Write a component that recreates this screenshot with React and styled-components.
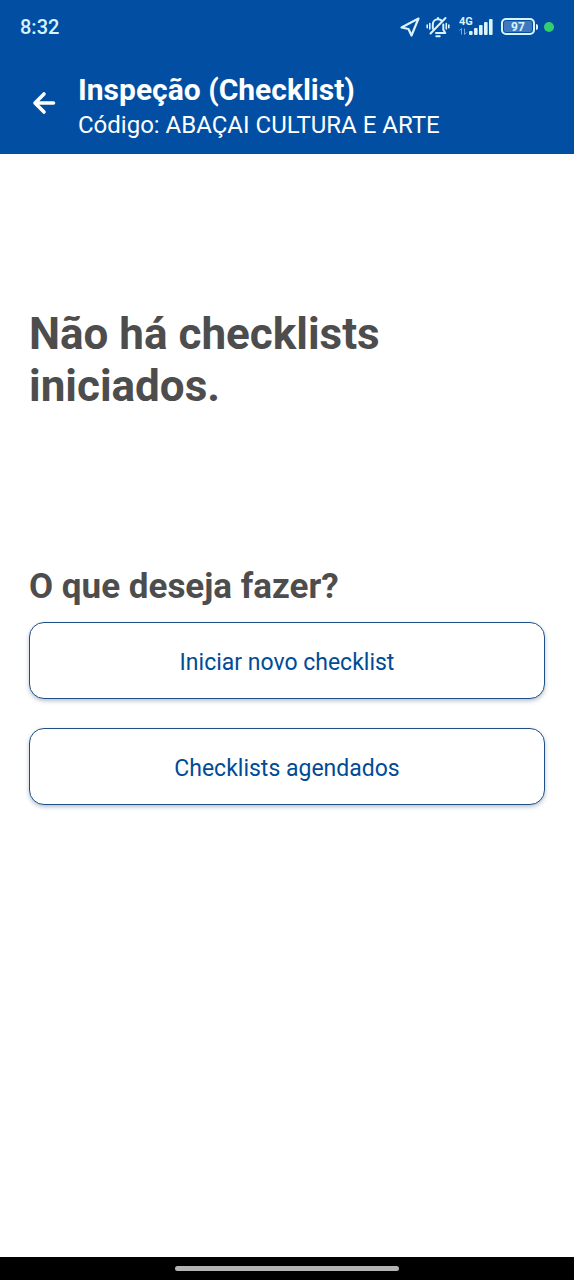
import React from "react";
import styled, { createGlobalStyle } from "styled-components";

const GlobalStyle = createGlobalStyle`
  *, *::before, *::after { box-sizing: border-box; }
  body { margin: 0; background: #fff; font-family: Roboto, "Liberation Sans", sans-serif; }
  h1, h2, p { margin: 0; }
`;

const Screen = styled.div`
  min-height: 100vh;
  display: flex;
  flex-direction: column;
`;

const StatusBar = styled.div`
  display: flex;
  align-items: center;
  justify-content: space-between;
  height: 53px;
  padding: 0 20px;
  background: #014ea3;
  color: #d9f3ff;
`;

const Clock = styled.time`
  font-size: 20px;
  line-height: 24px;
  font-weight: 500;
`;

const StatusIcons = styled.div`
  display: flex;
  align-items: center;
`;

const StatusIcon = styled.svg`
  display: block;
  flex: none;
  margin-right: ${(p) => p.$gap || 0}px;
`;

const Signal = styled.div`
  display: grid;
  grid-template-columns: 34px;
  margin-right: 8px;

  > * { grid-area: 1 / 1; }
`;

const Network = styled.span`
  font-size: 11px;
  line-height: 10px;
  font-weight: 700;
`;

const Battery = styled.div`
  display: flex;
  align-items: center;
  margin-right: 6px;

  &::after {
    content: "";
    width: 2px;
    height: 6px;
    margin-left: 1px;
    border-radius: 0 2px 2px 0;
    background: #d9f3ff;
  }
`;

const BatteryLevel = styled.span`
  width: 34px;
  height: 17px;
  border: 2px solid #d9f3ff;
  border-radius: 5px;
  box-shadow: inset 0 0 0 1px #014ea3;
  background: #3f78bd;
  font-size: 12px;
  line-height: 14px;
  font-weight: 700;
  text-align: center;
`;

const ActiveDot = styled.span`
  width: 10px;
  height: 10px;
  border-radius: 50%;
  background: #33cf6e;
`;

const Header = styled.header`
  display: flex;
  align-items: flex-start;
  gap: 12px;
  padding: 19px 22px 12px;
  background: #014ea3;
  color: #fff;
`;

const BackButton = styled.button`
  display: grid;
  place-items: center;
  width: 44px;
  height: 62px;
  padding: 0;
  border: 0;
  background: none;
  color: inherit;
  cursor: pointer;
`;

const Title = styled.h1`
  font-size: 30px;
  line-height: 36px;
  font-weight: 700;
`;

const Subtitle = styled.p`
  font-size: 24px;
  line-height: 34px;
`;

const Main = styled.main`
  flex: 1;
  padding: 0 29px 29px;
`;

const EmptyMessage = styled.p`
  padding: 154px 0;
  color: #4d4d4d;
  font-size: 44px;
  line-height: 52px;
  font-weight: 700;
`;

const Question = styled.h2`
  margin-bottom: 14px;
  color: #4d4d4d;
  font-size: 35px;
  line-height: 42px;
  font-weight: 700;
`;

const Actions = styled.div`
  display: flex;
  flex-direction: column;
  gap: 29px;
`;

const ActionButton = styled.button`
  width: 100%;
  padding: 26px 16px 22px;
  border: 1px solid #1f4f88;
  border-radius: 15px;
  background: #fff;
  box-shadow: 0 2px 4px rgba(20, 50, 90, 0.3);
  color: #014b96;
  font-family: inherit;
  font-size: 23px;
  line-height: 27px;
  cursor: pointer;
`;

const NavigationBar = styled.div`
  display: flex;
  justify-content: center;
  align-items: center;
  height: 23px;
  background: #000;
`;

const HomeHandle = styled.span`
  width: 39%;
  height: 5px;
  border-radius: 3px;
  background: #b3b3b3;
`;

function LocationIcon() {
  return (
    <StatusIcon $gap={6} width="20" height="20" viewBox="0 0 20 20" fill="none" stroke="currentColor" strokeWidth="2.2" strokeLinejoin="round" aria-hidden="true">
      <path d="M18.5 1.5 1.5 10.5 8.5 12 11.5 18.5Z" />
    </StatusIcon>
  );
}

function MutedBellIcon() {
  return (
    <StatusIcon $gap={9} width="24" height="22" viewBox="0 0 24 22" fill="none" stroke="currentColor" strokeWidth="2" strokeLinecap="round" strokeLinejoin="round" aria-hidden="true">
      <path d="M6.8 12.5V8.5C6.8 5.5 9 3.2 12 3.2c1.2 0 2.2.3 3 .9M17.3 8.5v5.2l2 3.3H10M12 3.2V2M19.5 2 4.5 17.5" />
      <path d="M10.3 20.3h3.4" />
      <path d="M3.8 7.5v5.5M1.2 9v2.8M20.3 7.5v5.5M22.8 9v2.8" strokeWidth="1.6" />
    </StatusIcon>
  );
}

function SignalBars() {
  return (
    <StatusIcon width="34" height="19" viewBox="0 0 34 19" fill="currentColor" aria-hidden="true">
      <rect x="10" y="14" width="3.6" height="4" rx="1" />
      <rect x="15" y="11" width="3.6" height="7" rx="1" />
      <rect x="20" y="8" width="3.6" height="10" rx="1" />
      <rect x="25" y="5" width="3.6" height="13" rx="1" />
      <rect x="30" y="2" width="3.6" height="16" rx="1" />
      <path d="M2.5 17.5v-6L.5 13.5M5.5 11.5v6L7.5 15.5" fill="none" stroke="#76a9dc" />
    </StatusIcon>
  );
}

function BackIcon() {
  return (
    <svg width="24" height="24" viewBox="0 0 24 24" fill="none" stroke="currentColor" strokeWidth="3.6" strokeLinecap="round" strokeLinejoin="round" aria-hidden="true">
      <path d="M12 3 3 12l9 9M3.5 12H21.5" />
    </svg>
  );
}

export default function App() {
  return (
    <Screen>
      <GlobalStyle />
      <StatusBar>
        <Clock>8:32</Clock>
        <StatusIcons>
          <LocationIcon />
          <MutedBellIcon />
          <Signal>
            <Network>4G</Network>
            <SignalBars />
          </Signal>
          <Battery>
            <BatteryLevel>97</BatteryLevel>
          </Battery>
          <ActiveDot />
        </StatusIcons>
      </StatusBar>
      <Header>
        <BackButton type="button" aria-label="Voltar">
          <BackIcon />
        </BackButton>
        <div>
          <Title>Inspeção (Checklist)</Title>
          <Subtitle>Código: ABAÇAI CULTURA E ARTE</Subtitle>
        </div>
      </Header>
      <Main>
        <EmptyMessage>Não há checklists iniciados.</EmptyMessage>
        <Question>O que deseja fazer?</Question>
        <Actions>
          <ActionButton type="button">Iniciar novo checklist</ActionButton>
          <ActionButton type="button">Checklists agendados</ActionButton>
        </Actions>
      </Main>
      <NavigationBar>
        <HomeHandle />
      </NavigationBar>
    </Screen>
  );
}
